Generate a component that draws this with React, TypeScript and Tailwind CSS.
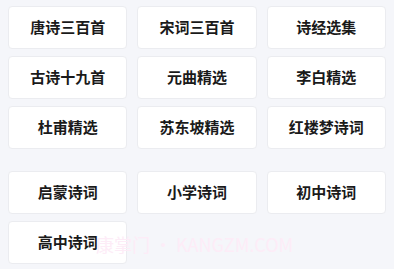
const groupA = [
  '唐诗三百首',
  '宋词三百首',
  '诗经选集',
  '古诗十九首',
  '元曲精选',
  '李白精选',
  '杜甫精选',
  '苏东坡精选',
  '红楼梦诗词',
];

const groupB = ['启蒙诗词', '小学诗词', '初中诗词', '高中诗词'];

function Tile({ label }: { label: string }) {
  return (
    <div className="flex h-[43px] items-center justify-center rounded-[4px] border border-[#ebecf0] bg-white text-[15px] font-bold text-[#1a1a1a]">
      {label}
    </div>
  );
}

export default function App() {
  return (
    <div
      className="relative h-[269px] w-[394px] overflow-hidden bg-[#f5f6fa] px-2 pt-[6px]"
      style={{ fontFamily: '"Noto Sans CJK SC", "Noto Sans", sans-serif' }}
    >
      <div className="grid grid-cols-3 gap-x-2.5 gap-y-[7px]">
        {groupA.map((t) => (
          <Tile key={t} label={t} />
        ))}
      </div>
      <div className="mt-[22px] grid grid-cols-3 gap-x-2.5 gap-y-[7px]">
        {groupB.map((t) => (
          <Tile key={t} label={t} />
        ))}
      </div>
      <div className="pointer-events-none absolute left-[96px] top-[231px] whitespace-nowrap text-[18px] text-[#fdecf7]">
        康掌门 • KANGZM.COM
      </div>
    </div>
  );
}
